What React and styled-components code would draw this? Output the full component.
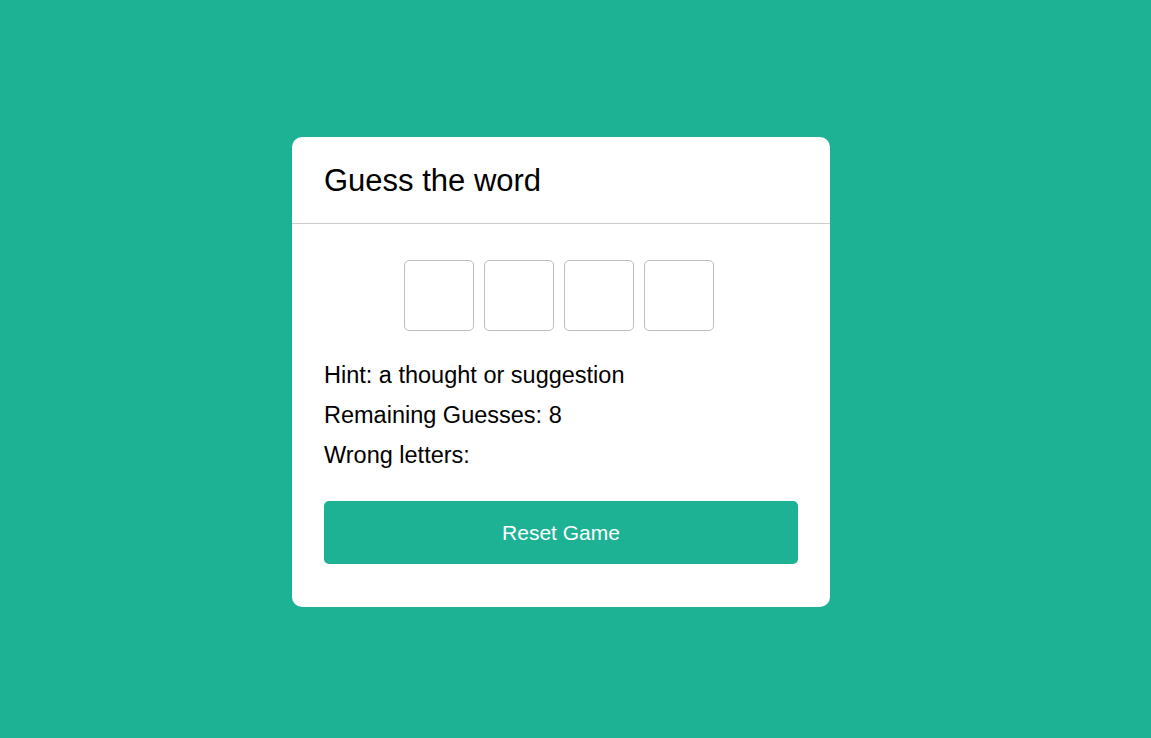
import React from "react";
import styled, { createGlobalStyle } from "styled-components";

const Global = createGlobalStyle`
  html, body { margin: 0; padding: 0; }
  body {
    background: #1db294;
    font-family: "Liberation Sans", Arial, sans-serif;
    color: #000;
  }
`;

const Page = styled.div`
  min-height: 738px;
  display: flex;
  justify-content: center;
  align-items: flex-start;
  padding: 137px 29px 0 0;
  box-sizing: border-box;
`;

const Card = styled.div`
  width: 538px;
  background: #fff;
  border-radius: 10px;
  box-sizing: border-box;
`;

const Header = styled.div`
  height: 86px;
  padding: 0 32px;
  display: flex;
  align-items: center;
  border-bottom: 1px solid #cccccc;
`;

const Title = styled.h1`
  margin: 0;
  font-size: 31px;
  font-weight: 400;
  padding-top: 2px;
`;

const Body = styled.div`
  padding: 36px 32px 43px;
`;

const Boxes = styled.div`
  display: flex;
  justify-content: center;
  gap: 10px;
  padding-right: 4px;
  margin-bottom: 31px;
`;

const LetterBox = styled.input`
  width: 70px;
  height: 71px;
  box-sizing: border-box;
  border: 1px solid #bdbdbd;
  border-radius: 5px;
  background: #fff;
  outline: none;
  text-align: center;
  font-family: inherit;
  font-size: 28px;
  padding: 0;
`;

const Info = styled.p`
  margin: 0 0 13px;
  font-size: 23.5px;
  line-height: 27px;
`;

const ResetButton = styled.button`
  display: block;
  width: 100%;
  height: 63px;
  margin-top: 32px;
  border: none;
  border-radius: 5px;
  background: #1db294;
  color: #fff;
  font-family: inherit;
  font-size: 21px;
  cursor: pointer;
`;

export default function App() {
  return (
    <>
      <Global />
      <Page>
        <Card>
          <Header>
            <Title>Guess the word</Title>
          </Header>
          <Body>
            <Boxes>
              {[0, 1, 2, 3].map((i) => (
                <LetterBox key={i} maxLength={1} />
              ))}
            </Boxes>
            <Info>Hint: a thought or suggestion</Info>
            <Info>Remaining Guesses: 8</Info>
            <Info>Wrong letters:</Info>
            <ResetButton>Reset Game</ResetButton>
          </Body>
        </Card>
      </Page>
    </>
  );
}
